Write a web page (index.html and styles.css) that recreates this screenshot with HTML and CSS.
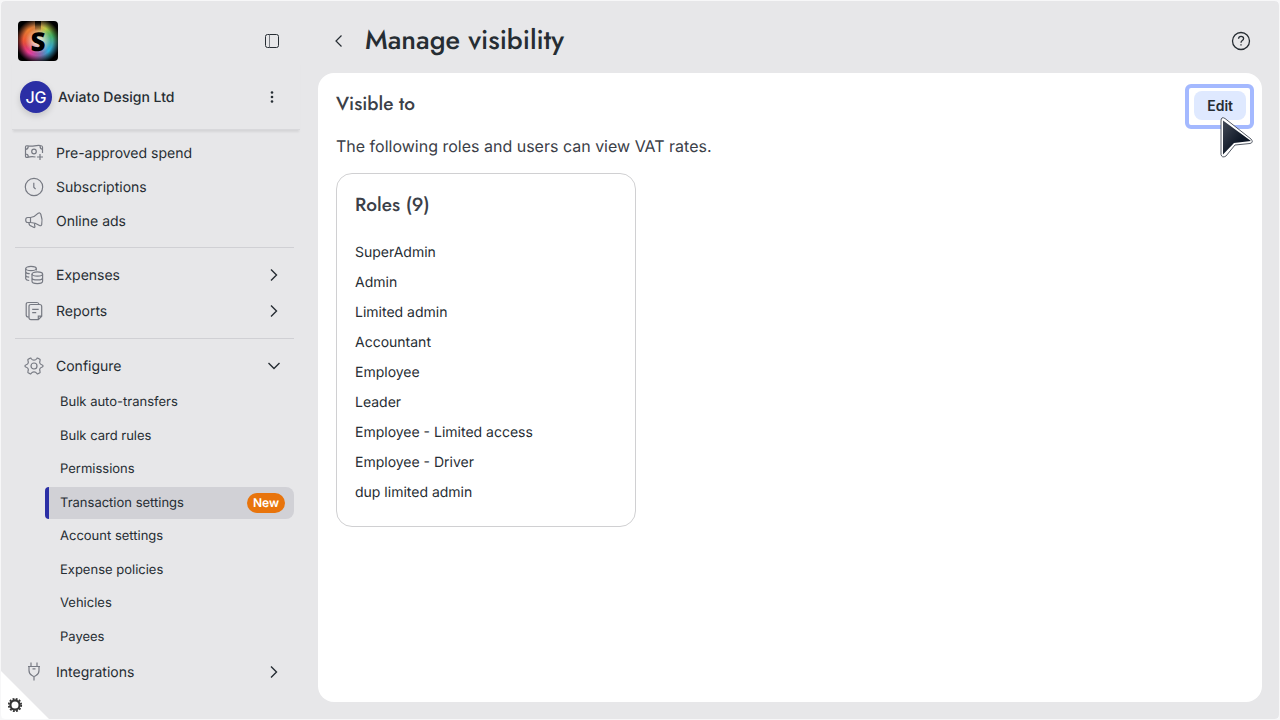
FILE: index.html
```html
<!DOCTYPE html>
<html lang="en">
<head>
<meta charset="utf-8">
<meta name="viewport" content="width=device-width, initial-scale=1">
<title>Manage visibility</title>
<link rel="stylesheet" href="styles.css">
</head>
<body>
<div class="app">
  <aside class="sidebar">
    <div class="brand">
      <div class="logo"><span>S</span></div>
      <button class="icon-btn" aria-label="Toggle sidebar">
        <svg width="16" height="16" viewBox="0 0 16 16" fill="none" stroke="#262d33"><rect x="1.5" y="1.500" width="13" height="13" rx="2"/><path d="M5.500 1.500v13" stroke="#777a80"/></svg>
      </button>
    </div>
    <div class="account">
      <span class="avatar">JG</span>
      <span class="account-name">Aviato Design Ltd</span>
      <button class="icon-btn" aria-label="Account menu">
        <svg width="16" height="16" viewBox="0 0 16 16" fill="#262d33"><circle cx="8" cy="3.500" r="1.300"/><circle cx="8" cy="8" r="1.300"/><circle cx="8" cy="12.500" r="1.300"/></svg>
      </button>
    </div>
    <nav class="nav">
      <div class="group compact">
        <a href="#" class="item">
          <svg class="icon" viewBox="0 0 20 20"><path d="M11.500 14q-4-.800-8 .300-2 .500-2-1V4q0-1.500 2-1.200 3.500.700 7 0t6-.300q2 .200 2 1.500V10M1.500 6.500q2.800-.300 2.800-3.500M18.500 6.500Q16 6 16 2.800M1.500 11q2.800 0 2.800 3"/><circle cx="10" cy="8.500" r="2.300"/><path d="M16 11v6M13 14h6"/></svg>
          <span>Pre-approved spend</span></a>
        <a href="#" class="item">
          <svg class="icon" viewBox="0 0 20 20"><circle cx="10" cy="10" r="8.700"/><path d="M9.800 5.800v4.400l1.800 2"/></svg>
          <span>Subscriptions</span></a>
        <a href="#" class="item">
          <svg class="icon" viewBox="0 0 20 20"><path d="M6.500 6.500H3.700q-2 0-2 2.500t2 2.500h2.800zM6.500 6.500q4.500-.7 7.800-4.300 1.500-.9 2.500 1 2 5.200.9 10.300-.7 1.900-2.200.9Q11.500 11.500 6.500 11.500M4.800 11.500q.3 3.200 2.700 3.700l2.800 1.300q1-.3.400-1.800L10.500 12.300"/></svg>
          <span>Online ads</span></a>
      </div>
      <div class="group">
        <a href="#" class="item">
          <svg class="icon" viewBox="0 0 20 20"><ellipse cx="7" cy="3.500" rx="5.300" ry="2.200"/><path d="M1.700 3.500v10.300q.5 1.500 3.500 1.700M12.300 3.500v2M1.700 7q.5 1.500 4 1.700M1.700 10.500q.5 1.500 3.500 1.700"/><ellipse cx="13.300" cy="9" rx="5.300" ry="2.200"/><path d="M8 9v7.300c0 3 10.600 3 10.600 0V9M8 12.700c0 3 10.600 3 10.600 0"/></svg>
          <span>Expenses</span>
          <svg class="chevron" viewBox="0 0 16 16"><path d="M5 2.500 10.500 8 5 13.500"/></svg></a>
        <a href="#" class="item">
          <svg class="icon" viewBox="0 0 20 20"><path d="M5 16H4.200q-2 0-2-2V3.500q0-2 2-2H13q1.700 0 2 2"/><path d="M14.300 18.700H7q-2 0-2-2V5.500q0-2 2-2h8.700q2 0 2 2v9.700zM14.300 18.700v-3.500h3.400M8.200 8.300h6.500M8.200 11.700h4"/></svg>
          <span>Reports</span>
          <svg class="chevron" viewBox="0 0 16 16"><path d="M5 2.500 10.500 8 5 13.500"/></svg></a>
      </div>
      <div class="group">
        <a href="#" class="item">
          <svg class="icon" viewBox="0 0 20 20"><path d="M6 2.200Q6.800 1.700 7.300 2.700 8.200 4.200 10 4.200T12.700 2.700Q13.200 1.700 14 2.200L15.800 3.300Q16.500 3.900 16 4.800 15.300 6.500 16 7.500T18.300 9Q19 9.200 19 10T18.300 11Q16.700 11.500 16 12.500T16 15.200Q16.500 16.100 15.800 16.700L14 17.800Q13.200 18.300 12.700 17.300 11.800 15.800 10 15.800T7.300 17.300Q6.800 18.300 6 17.800L4.200 16.700Q3.500 16.100 4 15.200 4.700 13.500 4 12.500T1.700 11Q1 10.800 1 10T1.700 9Q3.300 8.500 4 7.500T4 4.800Q3.500 3.900 4.200 3.300z"/><circle cx="10" cy="10" r="3"/></svg>
          <span>Configure</span>
          <svg class="chevron" viewBox="0 0 16 16"><path d="M2.500 5 8 10.500 13.500 5"/></svg></a>
        <div class="subnav">
          <a href="#">Bulk auto-transfers</a>
          <a href="#">Bulk card rules</a>
          <a href="#">Permissions</a>
          <a href="#" class="active" aria-current="page">Transaction settings<span class="badge">New</span></a>
          <a href="#">Account settings</a>
          <a href="#">Expense policies</a>
          <a href="#">Vehicles</a>
          <a href="#">Payees</a>
        </div>
        <a href="#" class="item">
          <svg class="icon" viewBox="0 0 20 20"><path d="M7 .5v4M13 .5v4M4 4.500h12M5 4.500v4Q5 12 8 13.500q1.500 1 2 1t2-1Q15 12 15 8.500v-4M10 14.500V18.500M8.500 6.800h3"/></svg>
          <span>Integrations</span>
          <svg class="chevron" viewBox="0 0 16 16"><path d="M5 2.500 10.500 8 5 13.500"/></svg></a>
      </div>
    </nav>
  </aside>

  <main class="main">
    <header class="topbar">
      <button class="icon-btn" aria-label="Back">
        <svg width="16" height="16" viewBox="0 0 16 16" fill="none" stroke="#262d33" stroke-width="1.200"><path d="M10.500 2.500 5 8l5.500 5.500"/></svg>
      </button>
      <h1>Manage visibility</h1>
      <button class="icon-btn help" aria-label="Help">
        <svg width="20" height="20" viewBox="0 0 20 20" fill="none" stroke="#262d33" stroke-width="1.300"><circle cx="10" cy="10" r="8.500"/><path d="M7.500 7.800q.2-2.500 2.600-2.500t2.500 2.200q0 1.200-1.300 2-1.300.8-1.300 2.200"/><path d="M10 13.200v1.400"/></svg>
      </button>
    </header>
    <section class="panel">
      <div class="panel-head">
        <h2>Visible to</h2>
        <div class="edit-wrap">
          <button class="edit">Edit</button>
          <svg class="pointer" width="38" height="46" viewBox="0 0 38 46"><defs><linearGradient id="shade" x1="0" y1="0" x2="1" y2="1"><stop offset="0" stop-color="#444b58"/><stop offset=".6" stop-color="#0e1726"/></linearGradient></defs><path d="M3 6q0-5 4-2.500L33 24q3 3.500-1 4.500l-15 1.500L8 41q-4 2.500-5-1.500z" fill="#fff" stroke="#555b66"/><path d="M5 5.500V39.500L16 28l17-2z" fill="url(#shade)"/></svg>
        </div>
      </div>
      <p class="intro">The following roles and users can view VAT rates.</p>
      <div class="roles">
        <h2>Roles (9)</h2>
        <ul>
          <li>SuperAdmin</li>
          <li>Admin</li>
          <li>Limited admin</li>
          <li>Accountant</li>
          <li>Employee</li>
          <li>Leader</li>
          <li>Employee - Limited access</li>
          <li>Employee - Driver</li>
          <li>dup limited admin</li>
        </ul>
      </div>
    </section>
  </main>
  <button class="corner" aria-label="Settings">
    <svg width="16" height="16" viewBox="0 0 16 16" fill="none" stroke="#333"><circle cx="8" cy="8" r="4.600" stroke-width="2.200"/><circle cx="8" cy="8" r="6.200" stroke-width="1.800" stroke-dasharray="1.900 1.346"/></svg>
  </button>
</div>
</body>
</html>
```

FILE: styles.css
```css
* { box-sizing: border-box; }

body {
  margin: 0;
  background: #f7f7f8;
  color: #262d33;
  font-family: Inter, "Liberation Sans", sans-serif;
  font-size: 14px;
  text-rendering: geometricPrecision;
}

h1, h2, p, ul { margin: 0; padding: 0; }
ul { list-style: none; }
a { color: inherit; text-decoration: none; }
button { font: inherit; color: inherit; border: 0; padding: 0; background: none; }

.app {
  position: relative;
  display: flex;
  min-height: 100vh;
  border: 1px solid #f7f7f8;
  border-radius: 5px;
  background: #e7e7e9;
  background-clip: padding-box;
  overflow: hidden;
}

.icon-btn { display: flex; }

/* Sidebar */
.sidebar { width: 299px; flex: none; }

.brand {
  display: flex;
  align-items: center;
  justify-content: space-between;
  padding: 20px 20px 0 17px;
}

.logo {
  display: grid;
  place-items: center;
  width: 40px;
  height: 40px;
  border-radius: 4px;
  background:
    radial-gradient(circle, #0000 52%, #000 80%),
    linear-gradient(#000 0, #0000 25%) 50% 0 / 6px 100% no-repeat,
    radial-gradient(circle, #fffbe0 0, #fffbe000 45%),
    radial-gradient(circle at 25% 22%, #f08030 0, #f0803000 42%),
    radial-gradient(circle at 15% 45%, #f03a30 0, #f03a3000 42%),
    radial-gradient(circle at 25% 78%, #f03aa8 0, #f03aa800 48%),
    radial-gradient(circle at 76% 74%, #28b4e0 0, #28b4e000 52%),
    radial-gradient(circle at 88% 38%, #4cae28 0, #4cae2800 38%),
    radial-gradient(circle at 70% 22%, #f8e458 0, #f8e45800 48%),
    #604860;
  color: #000;
  font-family: "Open Sans", sans-serif;
  font-size: 26px;
  font-weight: 800;
  line-height: 40px;
}

.account {
  display: flex;
  align-items: center;
  gap: 6px;
  margin-left: 11px;
  padding: 20px 20px 16px 8px;
  border-bottom: 1px solid #d8d8db;
  box-shadow: 0 3px 2px -1px #00000014;
}
.account .icon-btn { margin-left: auto; }

.avatar {
  display: grid;
  place-items: center;
  width: 32px;
  height: 32px;
  border-radius: 50%;
  background: #2b2fa5;
  box-shadow: 0 3px 6px #00000026;
  color: #fff;
  font-size: 16px;
  font-weight: 500;
}
.account-name { font-weight: 500; }

.nav { padding: 6px 6px 0 14px; }
.group { padding: 9px 0; border-bottom: 1px solid #d0d0d4; }
.group.compact { padding-top: 0; }
.group:last-child { border: 0; }

.item {
  display: flex;
  align-items: center;
  gap: 12px;
  height: 36px;
  padding: 0 12px 0 9px;
}
.compact .item { height: 34px; }

.icon { width: 20px; height: 20px; fill: none; stroke: #777a83; stroke-width: 1.2; }
.chevron { width: 16px; height: 16px; margin-left: auto; fill: none; stroke: #262d33; stroke-width: 1.4; }

.subnav { display: flex; flex-direction: column; justify-content: space-between; height: 270px; padding: 2px 0 1px; }
.subnav a {
  display: flex;
  align-items: center;
  justify-content: space-between;
  height: 32px;
  margin-left: 30px;
  padding: 0 9px 0 11px;
  border-left: 4px solid transparent;
  font-size: 13px;
}
.subnav .active {
  border-color: #2b2fa5;
  border-radius: 4px 8px 8px 4px;
  background: #d1d1d6;
}

.badge {
  padding: 0 6px;
  border-radius: 10px;
  background: #e8740c;
  color: #fff;
  font-size: 12px;
  font-weight: 600;
  line-height: 20px;
}

/* Main area */
.main { display: flex; flex: 1; flex-direction: column; padding: 0 17px 17px 18px; }

.topbar { display: flex; align-items: center; height: 72px; padding: 8px 11px 0 13px; }
h1, h2 { font-family: Jost, Lato, sans-serif; font-weight: 500; }
h1 { margin-left: 18px; font-size: 27px; line-height: 40px; }
h2 { color: #3b4048; font-size: 19px; line-height: 28px; }
.help { margin-left: auto; }

.panel { flex: 1; padding: 11px 8px 18px 18px; border-radius: 16px; background: #fff; }
.panel-head { display: flex; justify-content: space-between; }
.panel-head h2 { margin-top: 7px; }

.edit-wrap { position: relative; padding: 3px 4px 5px 5px; border: 4px solid #a4b9ff; border-radius: 6px; }
.edit {
  display: block;
  padding: 0 13px;
  border-radius: 8px;
  background: #dfe9ff;
  font-weight: 600;
  line-height: 29px;
}
.pointer { position: absolute; left: 29px; top: 27px; }

.intro { margin-top: 3px; color: #3b4048; font-size: 16px; line-height: 28px; }

.roles {
  max-width: 300px;
  margin-top: 13px;
  padding: 18px;
  border: 1px solid #d0d0d2;
  border-radius: 16px;
}
.roles ul { margin-top: 18px; }
.roles li { line-height: 30px; }

/* Corner settings tab */
.corner {
  position: absolute;
  left: 0;
  bottom: 0;
  display: flex;
  align-items: flex-end;
  width: 48px;
  height: 48px;
  padding: 0 0 6px 6px;
  background: #fff;
  clip-path: polygon(0 0, 100% 100%, 0 100%);
}
```
